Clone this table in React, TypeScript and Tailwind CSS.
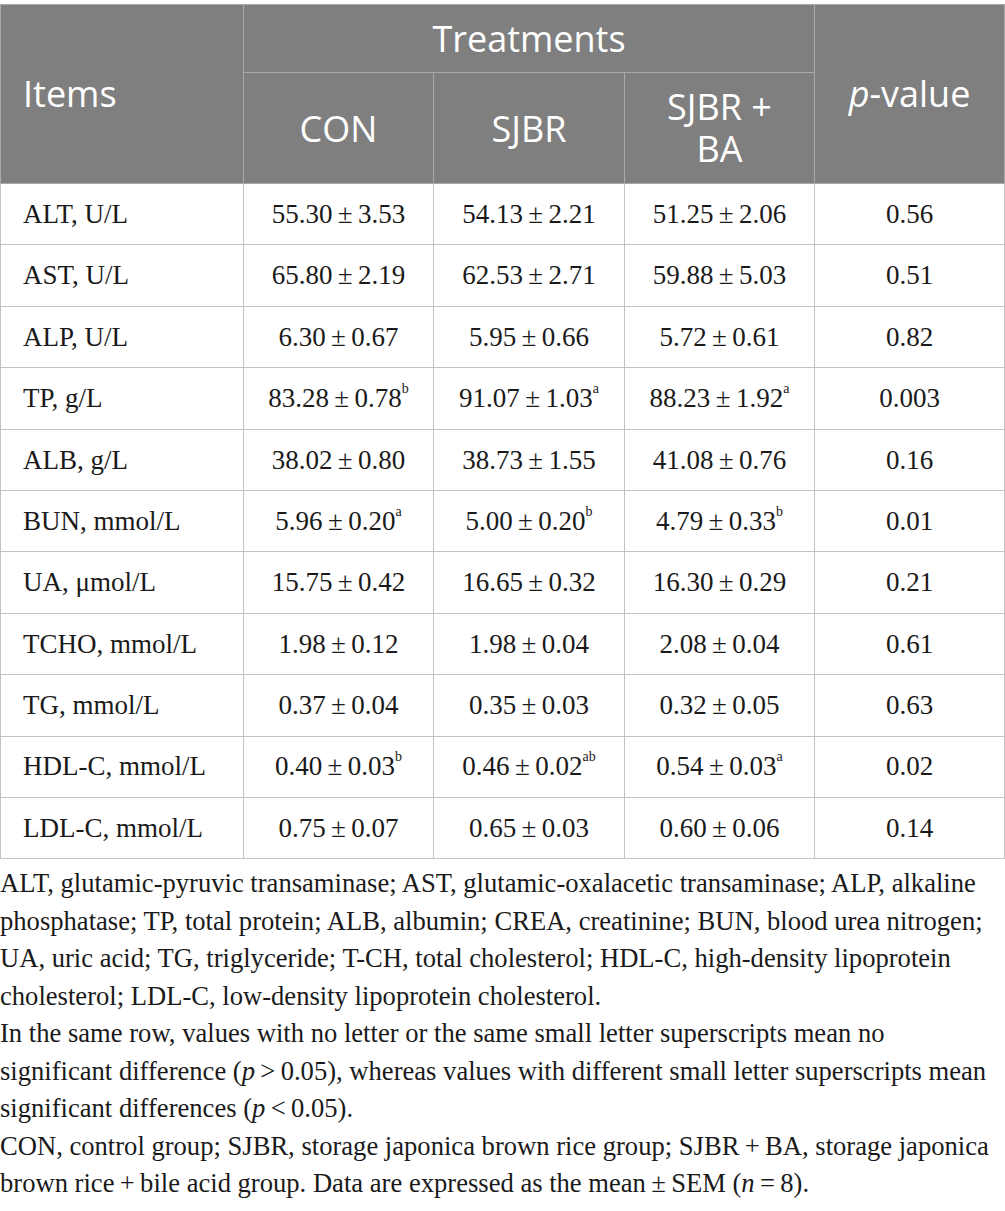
import React from 'react';

type Row = {
  item: string;
  con: [string, string?];
  sjbr: [string, string?];
  ba: [string, string?];
  p: string;
};

const ROWS: Row[] = [
  { item: 'ALT, U/L', con: ['55.30\u2009±\u20093.53'], sjbr: ['54.13\u2009±\u20092.21'], ba: ['51.25\u2009±\u20092.06'], p: '0.56' },
  { item: 'AST, U/L', con: ['65.80\u2009±\u20092.19'], sjbr: ['62.53\u2009±\u20092.71'], ba: ['59.88\u2009±\u20095.03'], p: '0.51' },
  { item: 'ALP, U/L', con: ['6.30\u2009±\u20090.67'], sjbr: ['5.95\u2009±\u20090.66'], ba: ['5.72\u2009±\u20090.61'], p: '0.82' },
  { item: 'TP, g/L', con: ['83.28\u2009±\u20090.78', 'b'], sjbr: ['91.07\u2009±\u20091.03', 'a'], ba: ['88.23\u2009±\u20091.92', 'a'], p: '0.003' },
  { item: 'ALB, g/L', con: ['38.02\u2009±\u20090.80'], sjbr: ['38.73\u2009±\u20091.55'], ba: ['41.08\u2009±\u20090.76'], p: '0.16' },
  { item: 'BUN, mmol/L', con: ['5.96\u2009±\u20090.20', 'a'], sjbr: ['5.00\u2009±\u20090.20', 'b'], ba: ['4.79\u2009±\u20090.33', 'b'], p: '0.01' },
  { item: 'UA, μmol/L', con: ['15.75\u2009±\u20090.42'], sjbr: ['16.65\u2009±\u20090.32'], ba: ['16.30\u2009±\u20090.29'], p: '0.21' },
  { item: 'TCHO, mmol/L', con: ['1.98\u2009±\u20090.12'], sjbr: ['1.98\u2009±\u20090.04'], ba: ['2.08\u2009±\u20090.04'], p: '0.61' },
  { item: 'TG, mmol/L', con: ['0.37\u2009±\u20090.04'], sjbr: ['0.35\u2009±\u20090.03'], ba: ['0.32\u2009±\u20090.05'], p: '0.63' },
  { item: 'HDL-C, mmol/L', con: ['0.40\u2009±\u20090.03', 'b'], sjbr: ['0.46\u2009±\u20090.02', 'ab'], ba: ['0.54\u2009±\u20090.03', 'a'], p: '0.02' },
  { item: 'LDL-C, mmol/L', con: ['0.75\u2009±\u20090.07'], sjbr: ['0.65\u2009±\u20090.03'], ba: ['0.60\u2009±\u20090.06'], p: '0.14' },
];

function Value({ v }: { v: [string, string?] }) {
  return (
    <>
      {v[0]}
      {v[1] && <sup className="text-[14px] relative -top-[4px] align-super leading-none">{v[1]}</sup>}
    </>
  );
}

const hd = 'border border-[#a9a9a9] font-normal';
const td = 'border border-[#c4c4c4] text-center';

export default function App() {
  return (
    <div className="w-[1005px] bg-white pt-[4px]">
      <table className="w-[1004px] border-collapse table-fixed">
        <colgroup>
          <col className="w-[243px]" />
          <col className="w-[190px]" />
          <col className="w-[191px]" />
          <col className="w-[190px]" />
          <col className="w-[190px]" />
        </colgroup>
        <thead className="bg-[#7f7f7f] text-white text-[36px] font-['Open_Sans',sans-serif]">
          <tr className="h-[68px]">
            <th rowSpan={2} className={`${hd} text-left pl-[22px] pb-[2px] leading-tight`}>Items</th>
            <th colSpan={3} className={`${hd} text-center leading-tight`}>Treatments</th>
            <th rowSpan={2} className={`${hd} text-center pb-[2px] leading-tight`}>
              <span className="italic">p</span>-value
            </th>
          </tr>
          <tr className="h-[111px]">
            <th className={`${hd} text-center leading-tight`}>CON</th>
            <th className={`${hd} text-center leading-tight`}>SJBR</th>
            <th className={`${hd} text-center leading-[42px] px-4`}>SJBR + BA</th>
          </tr>
        </thead>
        <tbody className="text-[27px] text-[#1a1a1a] font-['Liberation_Serif',serif]">
          {ROWS.map((r) => (
            <tr key={r.item} className="h-[61.4px]">
              <td className="border border-[#c4c4c4] text-left pl-[22px]">{r.item}</td>
              <td className={td}><Value v={r.con} /></td>
              <td className={td}><Value v={r.sjbr} /></td>
              <td className={td}><Value v={r.ba} /></td>
              <td className={td}>{r.p}</td>
            </tr>
          ))}
        </tbody>
      </table>

      <div className="mt-[6px] text-[26.6px] leading-[37.5px] text-[#1a1a1a] font-['Liberation_Serif',serif] whitespace-nowrap">
        <p>
          ALT, glutamic-pyruvic transaminase; AST, glutamic-oxalacetic transaminase; ALP, alkaline
          <br />
          phosphatase; TP, total protein; ALB, albumin; CREA, creatinine; BUN, blood urea nitrogen;
          <br />
          UA, uric acid; TG, triglyceride; T-CH, total cholesterol; HDL-C, high-density lipoprotein
          <br />
          cholesterol; LDL-C, low-density lipoprotein cholesterol.
        </p>
        <p>
          In the same row, values with no letter or the same small letter superscripts mean no
          <br />
          significant difference (<span className="italic">p</span>{'\u2009>\u2009'}0.05), whereas values with different small letter superscripts mean
          <br />
          significant differences (<span className="italic">p</span>{'\u2009<\u2009'}0.05).
        </p>
        <p>
          CON, control group; SJBR, storage japonica brown rice group; SJBR{'\u2009+\u2009'}BA, storage japonica
          <br />
          brown rice{'\u2009+\u2009'}bile acid group. Data are expressed as the mean{'\u2009±\u2009'}SEM (<span className="italic">n</span>{'\u2009=\u2009'}8).
        </p>
      </div>
    </div>
  );
}
